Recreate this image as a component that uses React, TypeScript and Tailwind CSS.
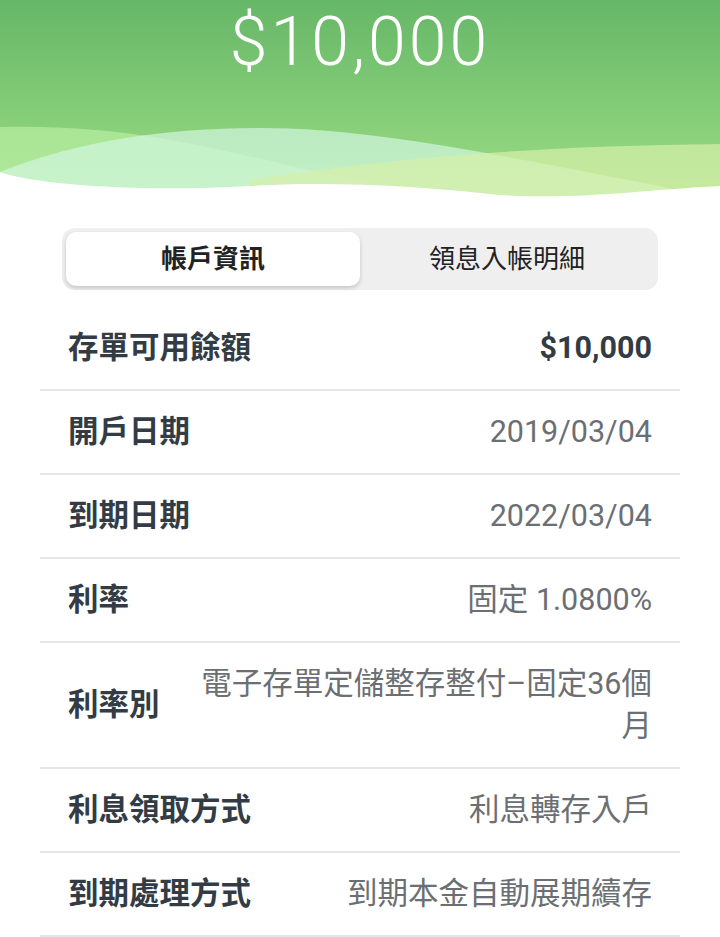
import React, { useState } from "react";

const rows: { label: string; value: string; strong?: boolean }[] = [
  { label: "存單可用餘額", value: "$10,000", strong: true },
  { label: "開戶日期", value: "2019/03/04" },
  { label: "到期日期", value: "2022/03/04" },
  { label: "利率", value: "固定 1.0800%" },
  { label: "利率別", value: "電子存單定儲整存整付–固定36個月" },
  { label: "利息領取方式", value: "利息轉存入戶" },
  { label: "到期處理方式", value: "到期本金自動展期續存" },
];

function HeaderWaves() {
  return (
    <svg
      className="absolute inset-0 h-full w-full"
      viewBox="0 0 720 200"
      preserveAspectRatio="none"
    >
      <defs>
        <linearGradient id="hdr" x1="0" y1="0" x2="0" y2="1">
          <stop offset="0" stopColor="#66b768" />
          <stop offset="0.75" stopColor="#8fd47d" />
          <stop offset="1" stopColor="#a3e08c" />
        </linearGradient>
      </defs>
      <rect x="0" y="0" width="720" height="200" fill="url(#hdr)" />
      {/* left light band */}
      <path
        d="M0,127 C120,124 200,145 300,168 C380,186 440,196 520,196 L0,200 Z"
        fill="#b4ec9f"
        opacity="0.75"
      />
      {/* mint arch */}
      <path
        d="M0,172 C80,140 170,128 260,128 C380,128 520,160 650,184 L720,200 L0,200 Z"
        fill="#d2f7df"
        opacity="0.7"
      />
      {/* right yellow-green */}
      <path
        d="M250,180 C380,160 520,146 720,144 L720,200 L250,200 Z"
        fill="#d6f0a8"
        opacity="0.7"
      />
      {/* white bottom */}
      <path
        d="M0,172 C40,186 150,192 250,186 C330,181 420,186 500,195 C580,200 640,190 720,186 L720,200 L0,200 Z"
        fill="#ffffff"
      />
    </svg>
  );
}

export default function App() {
  const [tab, setTab] = useState(0);

  return (
    <div
      className="min-h-[937px] w-[720px] bg-white"
      style={{ fontFamily: 'Roboto, "Noto Sans CJK TC", sans-serif' }}
    >
      <div className="relative h-[200px] overflow-hidden">
        <HeaderWaves />
        <div className="relative pt-[8px] text-center text-[68px] font-light leading-none tracking-[3px] text-white">
          $10,000
        </div>
      </div>

      <div className="mx-[62px] mt-[28px] flex h-[62px] rounded-[13px] bg-[#efefef] p-[4px]">
        {["帳戶資訊", "領息入帳明細"].map((t, i) => (
          <button
            key={t}
            onClick={() => setTab(i)}
            className={`flex flex-1 items-center justify-center rounded-[10px] text-[26px] text-[#222] ${
              tab === i
                ? "bg-white font-bold shadow-[0_2px_4px_rgba(0,0,0,0.18)]"
                : "font-normal"
            }`}
          >
            {t}
          </button>
        ))}
      </div>

      <div className="mx-[40px] mt-[17px]">
        {rows.map((r) => (
          <div
            key={r.label}
            className="flex items-center border-b-2 border-[#e6e6e6] px-[28px] py-[20px] text-[30.5px] leading-[42px]"
          >
            <div className="shrink-0 font-bold text-[#333c44]">{r.label}</div>
            <div
              className={`ml-[32px] flex-1 text-right ${
                r.strong ? "font-bold text-[#333c44]" : "text-[#6b6f73]"
              }`}
            >
              {r.value}
            </div>
          </div>
        ))}
      </div>
    </div>
  );
}
